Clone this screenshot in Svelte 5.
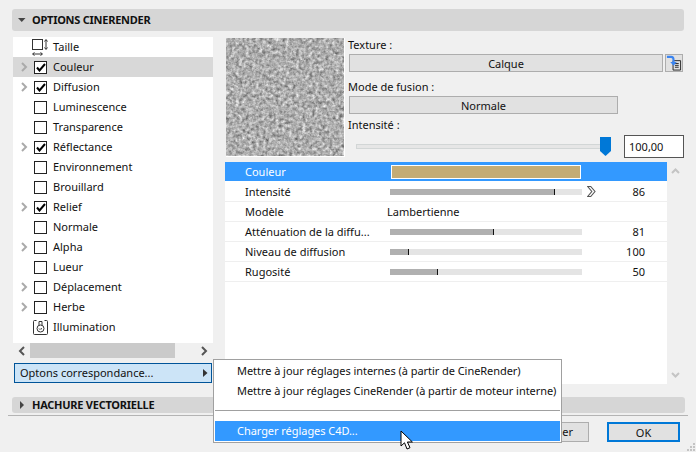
<script>
  const rows = [
    { label: 'Taille', icon: 'size' },
    { label: 'Couleur', arrow: true, checked: true, selected: true },
    { label: 'Diffusion', arrow: true, checked: true },
    { label: 'Luminescence' },
    { label: 'Transparence' },
    { label: 'Réflectance', arrow: true, checked: true },
    { label: 'Environnement' },
    { label: 'Brouillard' },
    { label: 'Relief', arrow: true, checked: true },
    { label: 'Normale' },
    { label: 'Alpha', arrow: true },
    { label: 'Lueur' },
    { label: 'Déplacement', arrow: true },
    { label: 'Herbe', arrow: true },
    { label: 'Illumination', icon: 'light' }
  ];
  const props = [
    { label: 'Intensité', pct: 86, value: '86', knob: true },
    { label: 'Modèle', text: 'Lambertienne' },
    { label: 'Atténuation de la diffu...', pct: 54, value: '81' },
    { label: 'Niveau de diffusion', pct: 10, value: '100' },
    { label: 'Rugosité', pct: 25, value: '50' }
  ];
</script>

<div class="dialog">
  <header class="section">
    <svg class="tri" width="8" height="8" viewBox="0 0 8 8"><path d="M0 2h7.500L3.750 6z" fill="#444" /></svg>
    <span>OPTIONS CINERENDER</span>
  </header>

  <div class="main">
    <div class="left">
      <ul class="tree">
        {#each rows as r}
          <li class:selected={r.selected}>
            <span class="arrow">
              {#if r.arrow}
                <svg width="7" height="10" viewBox="0 0 7 10"><path d="M1 1l4 4-4 4" fill="none" stroke="#aaa" stroke-width="2" /></svg>
              {/if}
            </span>
            {#if r.icon === 'size'}
              <svg class="ic size" width="17" height="17" viewBox="0 0 17 17">
                <rect x="0.500" y="0.500" width="10" height="10" fill="#fff" stroke="#333" />
                <path d="M14 1v9M12.500 2.500L14 0.500l1.500 2M12.500 8.500L14 10.500l1.500-2M1 15h9M2.500 13.500L0.500 15l2 1.500M8.500 13.500l2 1.500-2 1.500" fill="none" stroke="#333" />
              </svg>
            {:else if r.icon === 'light'}
              <svg class="ic light" width="15" height="15" viewBox="0 0 15 15">
                <path d="M3.500 0.500H1.500a1 1 0 0 0-1 1v12a1 1 0 0 0 1 1h12a1 1 0 0 0 1-1v-12a1 1 0 0 0-1-1h-2" fill="none" stroke="#333" />
                <circle cx="7.500" cy="8.500" r="3.500" fill="none" stroke="#333" />
                <path d="M6 5V1.500h3V5M6 8.500l1 1 1-1 1 .5" fill="none" stroke="#333" />
              </svg>
            {:else}
              <span class="box">
                {#if r.checked}
                  <svg width="10" height="9" viewBox="0 0 10 9"><path d="M1 4.500L3.500 7.500L9 1" fill="none" stroke="#000" stroke-width="2" /></svg>
                {/if}
              </span>
            {/if}
            <span class="lbl">{r.label}</span>
          </li>
        {/each}
      </ul>
      <div class="hscroll">
        <svg width="7" height="10" viewBox="0 0 7 10"><path d="M6 1L2 5l4 4" fill="none" stroke="#555" stroke-width="2" /></svg>
        <div class="thumb"></div>
        <svg width="7" height="10" viewBox="0 0 7 10"><path d="M1 1l4 4-4 4" fill="none" stroke="#555" stroke-width="2" /></svg>
      </div>
      <button class="options">
        <span>Optons correspondance...</span>
        <svg width="5" height="8" viewBox="0 0 5 8"><path d="M0 0l4.500 4L0 8z" fill="#333" /></svg>
      </button>
    </div>

    <div class="right">
      <div class="top">
        <svg class="tex" width="118" height="118">
          <filter id="noise" x="0" y="0" width="100%" height="100%" color-interpolation-filters="sRGB">
            <feTurbulence type="fractalNoise" baseFrequency="0.3" numOctaves="3" seed="4" />
            <feColorMatrix values="0.48 0.48 0 0 0.2  0.48 0.48 0 0 0.2  0.48 0.48 0 0 0.2  0 0 0 0 1" />
          </filter>
          <rect width="118" height="118" filter="url(#noise)" />
        </svg>
        <div class="controls">
          <div class="cap">Texture :</div>
          <div class="texrow">
            <div class="pop wide">Calque</div>
            <div class="iconbtn">
              <svg width="17" height="16" viewBox="0 0 17 16">
                <path d="M7.500 5.500h8v10h-8z" fill="none" stroke="#222" />
                <path d="M9.500 8.500h4M9.500 10.500h4M9.500 12.500h4" stroke="#222" />
                <path d="M1 1.500h4.500q2.500 0 2.500 3V8" fill="none" stroke="#3a84f0" stroke-width="2.200" />
                <path d="M4.500 7h7L8 11z" fill="#3a84f0" />
              </svg>
            </div>
          </div>
          <div class="cap gap1">Mode de fusion :</div>
          <div class="pop mid">Normale</div>
          <div class="cap gap2">Intensité :</div>
          <div class="sliderrow">
            <div class="track"></div>
            <svg class="thumbblue" width="11" height="19" viewBox="0 0 11 19"><path d="M0 0h11v14l-5.500 5L0 14z" fill="#0078d7" /></svg>
            <div class="num">100,00</div>
          </div>
        </div>
      </div>

      <div class="propwrap">
        <div class="props">
          <div class="prow sel">
            <span class="pname">Couleur</span>
            <span class="swatch"></span>
          </div>
          {#each props as p}
            <div class="prow">
              <span class="pname">{p.label}</span>
              {#if p.text}
                <span class="ptext">{p.text}</span>
              {:else}
                <span class="bar"><span class="fill" style="width:{p.pct}%"></span></span>
                <span class="knob">
                  {#if p.knob}
                    <svg width="9" height="11" viewBox="0 0 9 11"><path d="M0.700 0.500h3L8 5.500l-4.300 5h-3L4.800 5.500z" fill="#fff" stroke="#555" stroke-width="1.100" /></svg>
                  {/if}
                </span>
                <span class="pval">{p.value}</span>
              {/if}
            </div>
          {/each}
        </div>
        <div class="vscroll">
          <svg width="9" height="6" viewBox="0 0 9 6"><path d="M1 5l3.500-3.500L8 5" fill="none" stroke="#c4c4c4" stroke-width="2" /></svg>
          <svg width="9" height="6" viewBox="0 0 9 6"><path d="M1 1l3.500 3.500L8 1" fill="none" stroke="#c4c4c4" stroke-width="2" /></svg>
        </div>
      </div>
    </div>
  </div>

  <header class="section second">
    <svg class="tri" width="8" height="8" viewBox="0 0 8 8"><path d="M2 0l4 4-4 4z" fill="#444" /></svg>
    <span>HACHURE VECTORIELLE</span>
  </header>

  <footer class="foot">
    <button class="btn">Annuler</button>
    <button class="btn ok">OK</button>
  </footer>

  <div class="menu">
    <div class="mi first">Mettre à jour réglages internes (à partir de CineRender)</div>
    <div class="mi">Mettre à jour réglages CineRender (à partir de moteur interne)</div>
    <div class="sep"></div>
    <div class="mi hi">Charger réglages C4D...</div>
  </div>

  <svg class="cursor" width="15" height="21" viewBox="0 0 15 21">
    <path d="M1 1v15l3.500-3.200L7 19l3-1.300-2.600-5.700h5z" fill="#fff" stroke="#000" stroke-width="1" />
  </svg>

  <svg class="grip" width="9" height="9" viewBox="0 0 9 9">
    <path d="M6 0h2v2H6zM3 3h2v2H3zM6 3h2v2H6zM0 6h2v2H0zM3 6h2v2H3zM6 6h2v2H6z" fill="#c4c4c4" />
  </svg>
</div>

<style>
  :global(body) { margin: 0; background: #f0f0f0; }
  .dialog {
    position: relative;
    width: 696px;
    height: 452px;
    overflow: hidden;
    box-sizing: border-box;
    padding-top: 9px;
    background: #f0f0f0;
    font: 11px/20px "Noto Sans", "Open Sans", sans-serif;
    color: #111;
  }
  .section {
    display: flex;
    align-items: center;
    height: 22px;
    margin: 0 12px;
    padding-left: 6px;
    gap: 6px;
    background: #d6d6d6;
    border-radius: 3px;
    font-weight: 700;
    font-size: 11px;
    letter-spacing: -0.25px;
    color: #111;
  }
  .section.second { height: 16px; margin-top: 6px; margin-right: 11px; }
  .main { display: flex; margin: 6px 0 0 13px; height: 354px; }
  .left { width: 200px; margin-right: 12px; }
  .tree { list-style: none; margin: 0; padding: 0 0 6px; background: #fff; }
  .tree li { display: flex; align-items: center; height: 20px; }
  .tree li.selected { background: #d8d8d8; }
  .arrow { width: 21px; padding-left: 8px; box-sizing: border-box; display: flex; }
  .box {
    width: 11px; height: 11px;
    border: 1px solid #222;
    background: #fff;
    display: flex; align-items: center; justify-content: center;
    margin-right: 6px;
  }
  .ic.size { margin-left: -2px; margin-right: 4px; }
  .ic.light { margin-left: -1px; margin-right: 5px; }
  .hscroll { display: flex; align-items: center; justify-content: space-between; height: 15px; padding: 0 2px 0 5px; }
  .thumb { width: 145px; height: 15px; background: #cacaca; margin-left: 5px; margin-right: auto; }
  .hscroll svg:last-child { margin-right: 3px; }
  .options {
    display: flex; align-items: center; justify-content: space-between;
    width: 198px; height: 20px; margin: 5px 0 0 1px; padding: 0 3px 0 5px;
    box-sizing: border-box;
    background: #cce4f7;
    border: 1px solid #005499;
    font: inherit; color: #111; line-height: 18px;
  }
  .right { flex: 1; display: flex; flex-direction: column; }
  .top { display: flex; height: 125px; }
  .tex { display: block; margin: 1px 4px 0 1px; border-right: 1px solid #fff; border-bottom: 1px solid #fff; background: #aaa; }
  .controls { width: 340px; }
  .cap { line-height: 16px; margin-left: -1px; }
  .gap1 { margin-top: 7px; }
  .gap2 { margin-top: 3px; }
  .texrow { display: flex; gap: 2px; margin-top: 1px; }
  .pop {
    height: 18px; box-sizing: border-box;
    background: #e1e1e1; border: 1px solid #adadad;
    text-align: center; line-height: 18px;
  }
  .wide { width: 314px; }
  .mid { width: 269px; margin-top: 1px; }
  .iconbtn {
    width: 18px; height: 18px; box-sizing: border-box;
    border: 1px solid #adadad; background: #e1e1e1;
    display: flex; align-items: center; justify-content: center;
  }
  .sliderrow { display: flex; align-items: center; margin-top: 1px; height: 24px; position: relative; }
  .track { width: 246px; height: 3px; margin-left: 7px; background: #e6e6e6; border: 1px solid #d2d6d6; }
  .thumbblue { margin-left: -4px; }
  .num {
    width: 60px; height: 23px; box-sizing: border-box; margin-left: 13px;
    border: 1px solid #555; background: #fff;
    padding-left: 4px; line-height: 21px;
  }
  .propwrap { display: flex; height: 222px; margin-top: 0; }
  .props { width: 442px; background: #fff; }
  .prow {
    display: flex; align-items: center; height: 20px; box-sizing: border-box;
    border-bottom: 1px solid #efefef;
  }
  .prow.sel { background: #3399ff; color: #fff; border-bottom: 0; height: 19px; margin-bottom: 1px; }
  .pname { width: 165px; padding-left: 20px; box-sizing: border-box; white-space: nowrap; }
  .swatch { width: 190px; height: 14px; box-sizing: border-box; background: #c4ac75; border: 1px solid #fff; margin-left: 1px; }
  .ptext { margin-left: -3px; }
  .bar { width: 192px; height: 6px; background: #e4e4e4; display: block; }
  .fill { display: block; height: 6px; background: #b0b0b0; border-right: 1px solid #111; box-sizing: border-box; }
  .knob { width: 14px; margin-left: 5px; display: flex; }
  .pval { width: 44px; text-align: right; }
  .vscroll { width: 17px; display: flex; flex-direction: column; justify-content: space-between; align-items: center; padding: 6px 0; box-sizing: border-box; }
  .foot {
    margin: 2px 8px 0 8px; border-top: 1px solid #b4b4b4;
    display: flex; justify-content: flex-end; gap: 18px; padding: 6px 8px 0 0;
  }
  .btn {
    width: 73px; height: 20px; padding: 0;
    background: #e1e1e1; border: 1px solid #adadad;
    font: inherit; color: #111; line-height: 18px;
  }
  .btn.ok { border: 2px solid #0078d7; }
  .menu {
    position: absolute; left: 213px; top: 359px; width: 349px; height: 84px;
    box-sizing: border-box; background: #fff; border: 1px solid #a0a0a0; padding: 1px;
  }
  .mi { height: 20px; line-height: 20px; padding-left: 22px; white-space: nowrap; color: #111; letter-spacing: -0.05px; }
  .mi.hi { background: #3399ff; color: #fff; }
  .sep { height: 1px; background: #a0a0a0; margin: 9px 0 10px; }
  .cursor { position: absolute; left: 400px; top: 430px; }
  .grip { position: absolute; right: 0; bottom: 0; }
</style>
